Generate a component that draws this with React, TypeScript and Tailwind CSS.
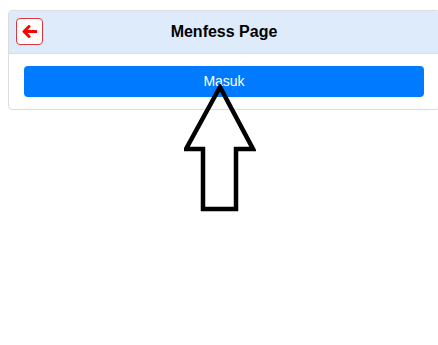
export default function App() {
  return (
    <div className="relative min-h-[345px] bg-white pt-[10px]" style={{ fontFamily: '"Liberation Sans", Arial, sans-serif' }}>
      {/* Card */}
      <div className="ml-2 w-[432px] rounded-[4px] border border-[#dcdcdc] overflow-hidden">
        {/* Header */}
        <div className="relative flex h-[43px] items-center justify-center border-b border-[#dcdcdc] bg-[#deebfb]">
          <button className="absolute left-[7px] top-[7px] flex h-[27px] w-[27px] items-center justify-center rounded-[4px] border border-[#e0353d] bg-white">
            <svg width="15" height="13" viewBox="0 0 15 13">
              <path d="M7 1.5 L2 6.5 L7 11.5 M2.5 6.5 H14" fill="none" stroke="#ff0000" strokeWidth="3" strokeLinecap="round" strokeLinejoin="round" />
            </svg>
          </button>
          <h1 className="text-[16px] font-bold text-black">Menfess Page</h1>
        </div>
        {/* Body */}
        <div className="px-[15px] pt-[12px] pb-[12px]">
          <button className="h-[31px] w-full rounded-[4px] bg-[#007bff] text-[14px] font-medium text-white">Masuk</button>
        </div>
      </div>

      {/* Arrow annotation */}
      <svg className="absolute left-[184px] top-[84px]" width="72" height="128" viewBox="184 84 72 128">
        <polygon
          points="220,87 186,149 203,149 203,209 236,209 236,149 253,149"
          fill="none"
          stroke="#000"
          strokeWidth="4.5"
          strokeLinejoin="miter"
        />
      </svg>
    </div>
  )
}
